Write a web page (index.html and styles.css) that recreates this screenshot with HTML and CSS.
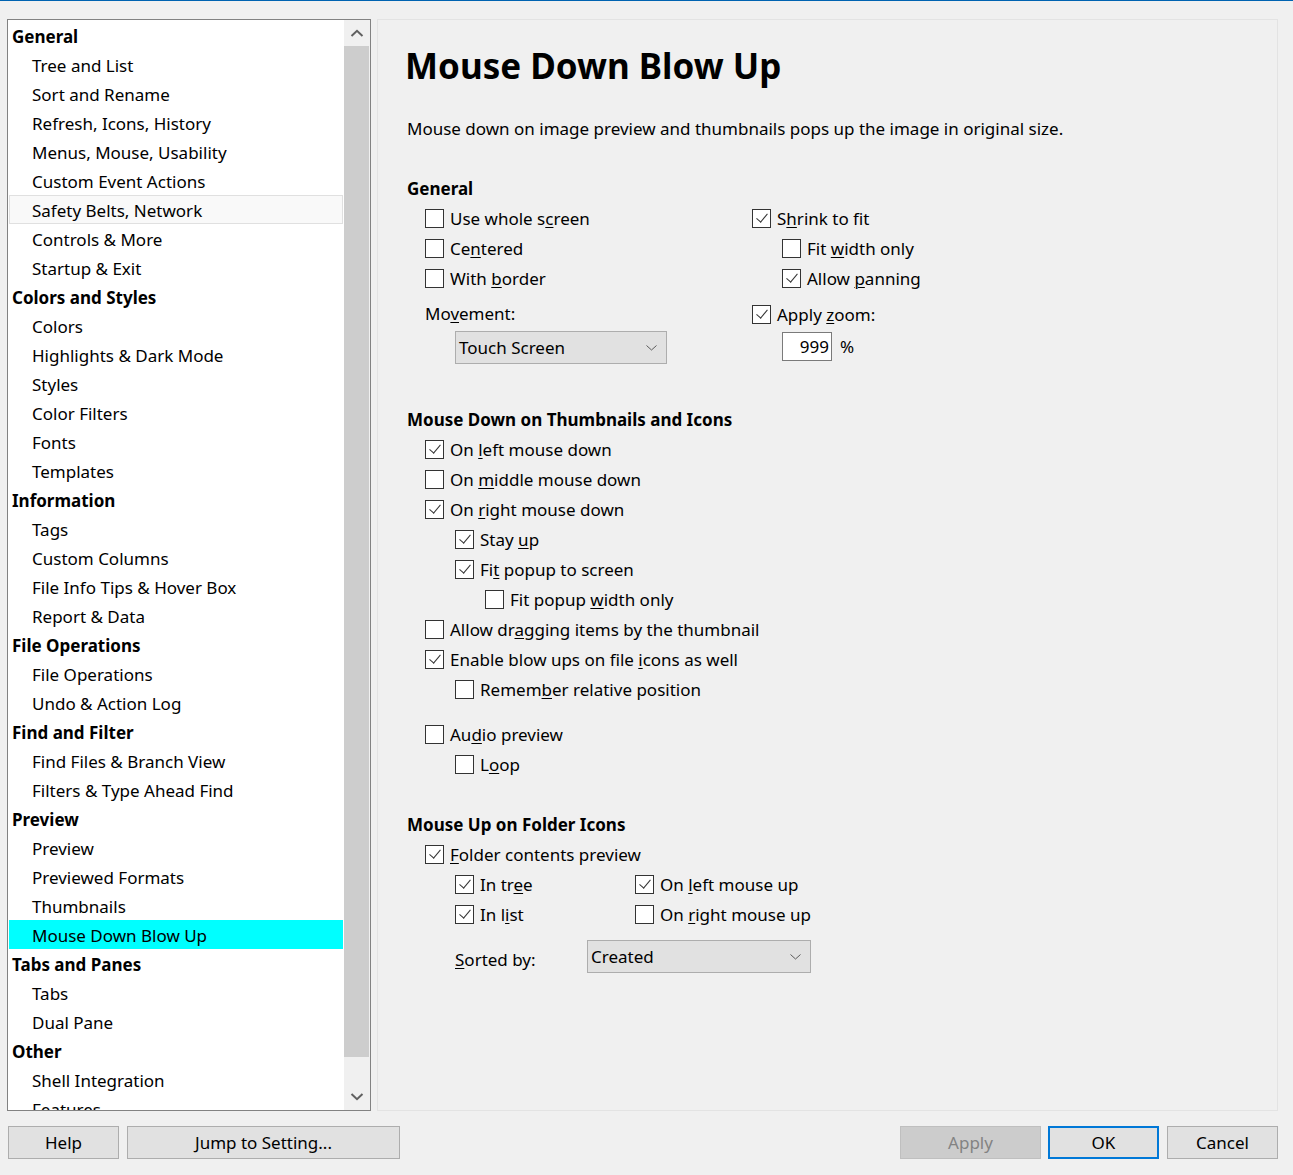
FILE: index.html
```html
<!DOCTYPE html>
<html lang="en">
<head>
<meta charset="utf-8">
<title>Mouse Down Blow Up</title>
<link rel="stylesheet" href="styles.css">
</head>
<body>
<div class="topline"></div>
<div class="dialog">
  <div class="panes">
    <div class="tree">
      <div class="tree-list">
        <div class="tr hd">General</div>
        <div class="tr">Tree and List</div>
        <div class="tr">Sort and Rename</div>
        <div class="tr">Refresh, Icons, History</div>
        <div class="tr">Menus, Mouse, Usability</div>
        <div class="tr">Custom Event Actions</div>
        <div class="tr hover">Safety Belts, Network</div>
        <div class="tr">Controls &amp; More</div>
        <div class="tr">Startup &amp; Exit</div>
        <div class="tr hd">Colors and Styles</div>
        <div class="tr">Colors</div>
        <div class="tr">Highlights &amp; Dark Mode</div>
        <div class="tr">Styles</div>
        <div class="tr">Color Filters</div>
        <div class="tr">Fonts</div>
        <div class="tr">Templates</div>
        <div class="tr hd">Information</div>
        <div class="tr">Tags</div>
        <div class="tr">Custom Columns</div>
        <div class="tr">File Info Tips &amp; Hover Box</div>
        <div class="tr">Report &amp; Data</div>
        <div class="tr hd">File Operations</div>
        <div class="tr">File Operations</div>
        <div class="tr">Undo &amp; Action Log</div>
        <div class="tr hd">Find and Filter</div>
        <div class="tr">Find Files &amp; Branch View</div>
        <div class="tr">Filters &amp; Type Ahead Find</div>
        <div class="tr hd">Preview</div>
        <div class="tr">Preview</div>
        <div class="tr">Previewed Formats</div>
        <div class="tr">Thumbnails</div>
        <div class="tr sel">Mouse Down Blow Up</div>
        <div class="tr hd">Tabs and Panes</div>
        <div class="tr">Tabs</div>
        <div class="tr">Dual Pane</div>
        <div class="tr hd">Other</div>
        <div class="tr">Shell Integration</div>
        <div class="tr">Features</div>
      </div>
      <div class="vscroll">
        <div class="sb-btn">
          <svg width="14" height="8" viewBox="0 0 14 8"><path d="M1.5 7 L7 1.8 L12.5 7" fill="none" stroke="#606060" stroke-width="2"/></svg>
        </div>
        <div class="sb-thumb"></div>
        <div class="sb-btn">
          <svg width="14" height="8" viewBox="0 0 14 8"><path d="M1.5 1 L7 6.2 L12.5 1" fill="none" stroke="#606060" stroke-width="2"/></svg>
        </div>
      </div>
    </div>

    <div class="page">
      <h1 class="title">Mouse Down Blow Up</h1>
      <div class="desc">Mouse down on image preview and thumbnails pops up the image in original size.</div>

      <div class="sec">General</div>
      <div class="gen-grid">
        <div class="col">
          <div class="cb"><span class="box"></span><span>Use whole s<u>c</u>reen</span></div>
          <div class="cb"><span class="box"></span><span>Ce<u>n</u>tered</span></div>
          <div class="cb"><span class="box"></span><span>With <u>b</u>order</span></div>
          <div class="lbl-row">Mo<u>v</u>ement:</div>
          <div class="select sel-move"><span>Touch Screen</span>
            <svg width="11" height="6" viewBox="0 0 11 6"><path d="M0.5 0.5 L5.5 5 L10.5 0.5" fill="none" stroke="#5a5a5a" stroke-width="1"/></svg>
          </div>
        </div>
        <div class="col">
          <div class="cb"><span class="box on"></span><span>S<u>h</u>rink to fit</span></div>
          <div class="cb ind1"><span class="box"></span><span>Fit <u>w</u>idth only</span></div>
          <div class="cb ind1"><span class="box on"></span><span>Allow <u>p</u>anning</span></div>
          <div class="cb zoom-row"><span class="box on"></span><span>Apply <u>z</u>oom:</span></div>
          <div class="zoom-in ind1"><span class="num">999</span><span>%</span></div>
        </div>
      </div>

      <div class="sec sec2">Mouse Down on Thumbnails and Icons</div>
      <div class="cb"><span class="box on"></span><span>On <u>l</u>eft mouse down</span></div>
      <div class="cb"><span class="box"></span><span>On <u>m</u>iddle mouse down</span></div>
      <div class="cb"><span class="box on"></span><span>On <u>r</u>ight mouse down</span></div>
      <div class="cb ind1"><span class="box on"></span><span>Stay <u>u</u>p</span></div>
      <div class="cb ind1"><span class="box on"></span><span>Fi<u>t</u> popup to screen</span></div>
      <div class="cb ind2"><span class="box"></span><span>Fit popup <u>w</u>idth only</span></div>
      <div class="cb"><span class="box"></span><span>Allow dr<u>a</u>gging items by the thumbnail</span></div>
      <div class="cb"><span class="box on"></span><span>Enable blow ups on file <u>i</u>cons as well</span></div>
      <div class="cb ind1"><span class="box"></span><span>Remem<u>b</u>er relative position</span></div>
      <div class="cb gap15"><span class="box"></span><span>Au<u>d</u>io preview</span></div>
      <div class="cb ind1"><span class="box"></span><span>L<u>o</u>op</span></div>

      <div class="sec sec3">Mouse Up on Folder Icons</div>
      <div class="cb"><span class="box on"></span><span><u>F</u>older contents preview</span></div>
      <div class="pair ind1">
        <div class="cb"><span class="box on"></span><span>In tr<u>e</u>e</span></div>
        <div class="cb"><span class="box on"></span><span>On <u>l</u>eft mouse up</span></div>
        <div class="cb"><span class="box on"></span><span>In l<u>i</u>st</span></div>
        <div class="cb"><span class="box"></span><span>On <u>r</u>ight mouse up</span></div>
      </div>
      <div class="sort-row ind1">
        <span class="sort-lbl"><u>S</u>orted by:</span>
        <div class="select sel-sort"><span>Created</span>
          <svg width="11" height="6" viewBox="0 0 11 6"><path d="M0.5 0.5 L5.5 5 L10.5 0.5" fill="none" stroke="#5a5a5a" stroke-width="1"/></svg>
        </div>
      </div>
    </div>
  </div>

  <div class="footer">
    <div class="btn w-help">Help</div>
    <div class="btn w-jump">Jump to Setting...</div>
    <div class="spacer"></div>
    <div class="btn w-apply disabled">Apply</div>
    <div class="btn w-ok default">OK</div>
    <div class="btn w-cancel">Cancel</div>
  </div>
</div>
</body>
</html>
```

FILE: styles.css
```css
* { box-sizing: border-box; }
html, body {
  margin: 0;
  padding: 0;
  background: #f0f0f0;
  font-family: "Noto Sans", "Open Sans", sans-serif;
  font-size: 17px;
  color: #000;
  width: 1293px;
  height: 1175px;
  overflow: hidden;
}
.topline { height: 1px; background: #0063b1; }
.dialog { padding: 18px 15px 0 7px; }
.panes { display: flex; gap: 6px; height: 1092px; }

/* tree */
.tree {
  width: 364px;
  height: 100%;
  border: 1px solid #828282;
  background: #fff;
  display: flex;
  overflow: hidden;
}
.tree-list {
  flex: 1;
  padding: 1px 1px 0 1px;
  overflow: hidden;
}
.tr {
  height: 29px;
  line-height: 25px;
  padding-top: 2px;
  padding-left: 22px;
  white-space: nowrap;
  border: 1px solid transparent;
}
.tr.hd { font-weight: bold; padding-left: 2px; }
.tr.hover { background: #f9f9f9; border-color: #e0e0e0; }
.tr.sel { background: #00ffff; border-color: #00ffff; }
.vscroll {
  width: 26px;
  background: #f0f0f0;
  display: flex;
  flex-direction: column;
  padding-right: 1px;
}
.sb-btn {
  height: 25px;
  display: flex;
  align-items: center;
  justify-content: center;
}
.sb-thumb { height: 1011px; background: #cdcdcd; margin-top: 1px; }
.vscroll .sb-btn:last-child { margin-top: auto; height: 27px; }

/* page */
.page {
  flex: 1;
  height: 100%;
  border: 1px solid #e3e3e3;
  background: #f0f0f0;
  padding: 0 0 0 29px;
}
.title {
  margin: 0 0 0 -2px;
  height: 92px;
  line-height: 92px;
  font-size: 35px;
  font-weight: bold;
}
.desc { height: 34px; line-height: 34px; }
.sec {
  height: 30px;
  line-height: 31px;
  font-weight: bold;
  font-size: 17px;
  margin-top: 27px;
}
.sec2 { margin-top: 40px; }
.sec3 { margin-top: 30px; }
.gen-grid { display: grid; grid-template-columns: 327px 1fr; padding-left: 18px; }
.cb {
  height: 30px;
  display: flex;
  align-items: center;
  gap: 6px;
  white-space: nowrap;
}
.page > .cb { margin-left: 18px; }
.page > .cb.ind1 { margin-left: 48px; }
.page > .cb.ind2 { margin-left: 78px; }
.col > .ind1 { margin-left: 30px; }
.gap15 { margin-top: 15px; }
.box {
  width: 19px;
  height: 19px;
  border: 1px solid #333;
  background: #fff;
  flex: none;
  position: relative;
}
.box.on::after {
  content: "";
  position: absolute;
  left: 6px;
  top: 1px;
  width: 5px;
  height: 10px;
  border-right: 1.5px solid #333;
  border-bottom: 1.5px solid #333;
  transform: rotate(40deg);
}
u { text-decoration-thickness: 1px; text-underline-offset: 2px; }
.lbl-row { height: 30px; line-height: 30px; margin-top: 6px; }
.zoom-row { margin-top: 6px; }
.select {
  height: 33px;
  background: #e1e1e1;
  border: 1px solid #adadad;
  display: flex;
  align-items: center;
  justify-content: space-between;
  padding: 0 9px 0 3px;
}
.sel-move { width: 212px; margin: 2px 0 0 30px; }
.zoom-in {
  display: flex;
  align-items: center;
  gap: 8px;
  margin-top: 3px;
}
.num {
  width: 50px;
  height: 29px;
  background: #fff;
  border: 1px solid #7a7a7a;
  text-align: right;
  line-height: 27px;
  padding-right: 2px;
}
.pair {
  display: grid;
  grid-template-columns: 180px auto;
  margin-left: 48px;
}
.sort-row {
  display: flex;
  align-items: center;
  margin: 11px 0 0 48px;
  height: 33px;
}
.sort-lbl { width: 132px; padding-top: 5px; }
.sel-sort { width: 224px; }

/* footer */
.footer {
  display: flex;
  gap: 8px;
  margin-top: 15px;
  padding-left: 1px;
}
.spacer { flex: 1; }
.btn {
  height: 33px;
  background: #e1e1e1;
  border: 1px solid #adadad;
  display: flex;
  align-items: center;
  justify-content: center;
}
.w-help { width: 111px; }
.w-jump { width: 273px; }
.w-apply { width: 141px; }
.w-ok { width: 111px; margin-left: -1px; }
.w-cancel { width: 111px; }
.disabled { background: #cccccc; border-color: #bfbfbf; color: #838383; }
.default { border: 2px solid #0078d7; }
```
